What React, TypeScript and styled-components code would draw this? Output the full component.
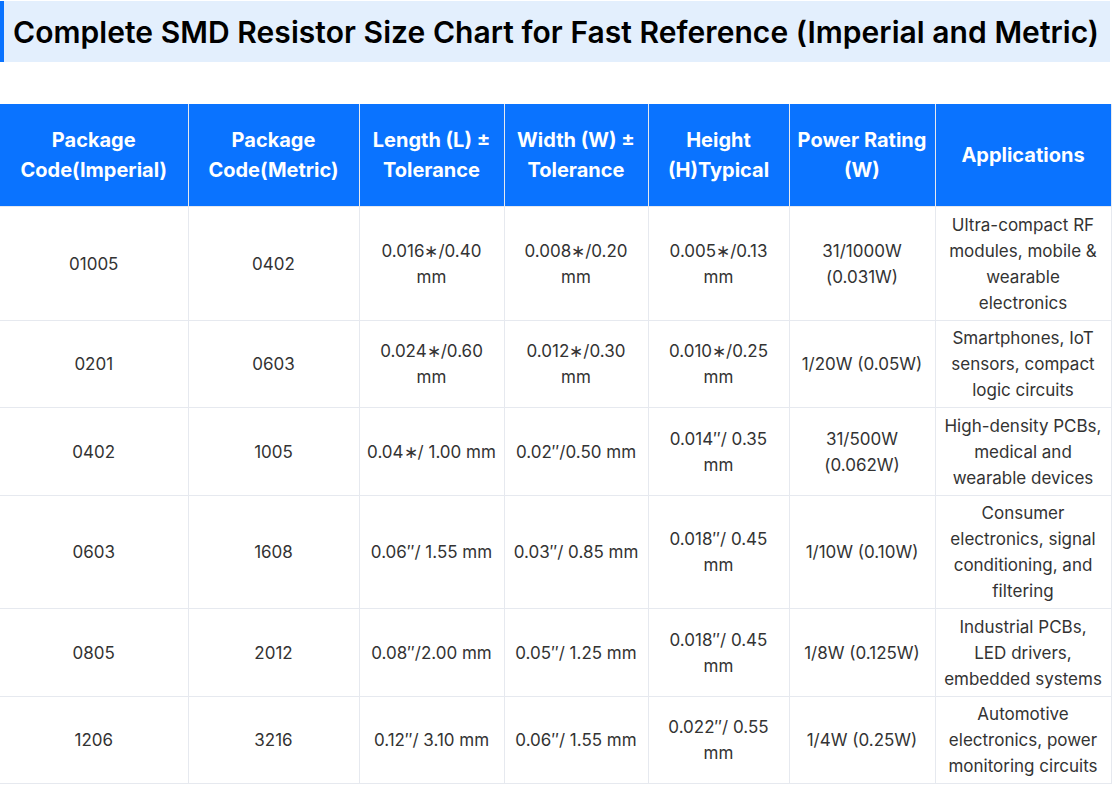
import React from "react";
import styled, { createGlobalStyle } from "styled-components";

const Global = createGlobalStyle`
  html, body { margin: 0; padding: 0; background: #fff; }
  body { font-family: Inter, "Noto Sans", "Liberation Sans", sans-serif; }
`;

const Page = styled.div`
  width: 1113px;
  padding-top: 1px;
`;

const Heading = styled.h2`
  margin: 0 3px 0 0;
  height: 61px;
  box-sizing: border-box;
  display: flex;
  align-items: center;
  padding-left: 9px;
  border-left: 4px solid #0a73ff;
  background: #e3effd;
  color: #000;
  font-size: 30px;
  font-weight: 600;
  letter-spacing: 0.05px;
  white-space: nowrap;
`;

const Table = styled.table`
  margin-top: 42px;
  width: 1111px;
  border-collapse: collapse;
  table-layout: fixed;
`;

const Th = styled.th`
  background: #0a73ff;
  color: #fff;
  font-size: 20px;
  font-weight: 700;
  line-height: 30px;
  padding: 21px 6px;
  border: 1px solid #e6e9ef;
  border-top: none;
  text-align: center;
  vertical-align: middle;
  &:first-child { border-left: none; }
`;

const Td = styled.td`
  color: #333;
  font-size: 17px;
  line-height: 26px;
  padding: 4.5px 6px 4px;
  border: 1px solid #e6e9ef;
  text-align: center;
  vertical-align: middle;
  &:first-child { border-left: none; }
`;

const headers = [
  "Package Code(Imperial)",
  "Package Code(Metric)",
  "Length (L) ± Tolerance",
  "Width (W) ± Tolerance",
  "Height (H)Typical",
  "Power Rating (W)",
  "Applications",
];

const widths = [188, 171, 145, 144, 141, 146, 176];

const rows = [
  ["01005", "0402", "0.016∗/0.40 mm", "0.008∗/0.20 mm", "0.005∗/0.13 mm", "31/1000W (0.031W)", "Ultra-compact RF modules, mobile & wearable electronics"],
  ["0201", "0603", "0.024∗/0.60 mm", "0.012∗/0.30 mm", "0.010∗/0.25 mm", "1/20W (0.05W)", "Smartphones, IoT sensors, compact logic circuits"],
  ["0402", "1005", "0.04∗/ 1.00 mm", "0.02″/0.50 mm", "0.014″/ 0.35 mm", "31/500W (0.062W)", "High-density PCBs, medical and wearable devices"],
  ["0603", "1608", "0.06″/ 1.55 mm", "0.03″/ 0.85 mm", "0.018″/ 0.45 mm", "1/10W (0.10W)", "Consumer electronics, signal conditioning, and filtering"],
  ["0805", "2012", "0.08″/2.00 mm", "0.05″/ 1.25 mm", "0.018″/ 0.45 mm", "1/8W (0.125W)", "Industrial PCBs, LED drivers, embedded systems"],
  ["1206", "3216", "0.12″/ 3.10 mm", "0.06″/ 1.55 mm", "0.022″/ 0.55 mm", "1/4W (0.25W)", "Automotive electronics, power monitoring circuits"],
];

export default function App() {
  return (
    <Page>
      <Global />
      <Heading>Complete SMD Resistor Size Chart for Fast Reference (Imperial and Metric)</Heading>
      <Table>
        <colgroup>
          {widths.map((w, i) => (
            <col key={i} style={{ width: w }} />
          ))}
        </colgroup>
        <thead>
          <tr>
            {headers.map((h) => (
              <Th key={h}>{h}</Th>
            ))}
          </tr>
        </thead>
        <tbody>
          {rows.map((r, i) => (
            <tr key={i}>
              {r.map((c, j) => (
                <Td key={j}>{c}</Td>
              ))}
            </tr>
          ))}
        </tbody>
      </Table>
    </Page>
  );
}
